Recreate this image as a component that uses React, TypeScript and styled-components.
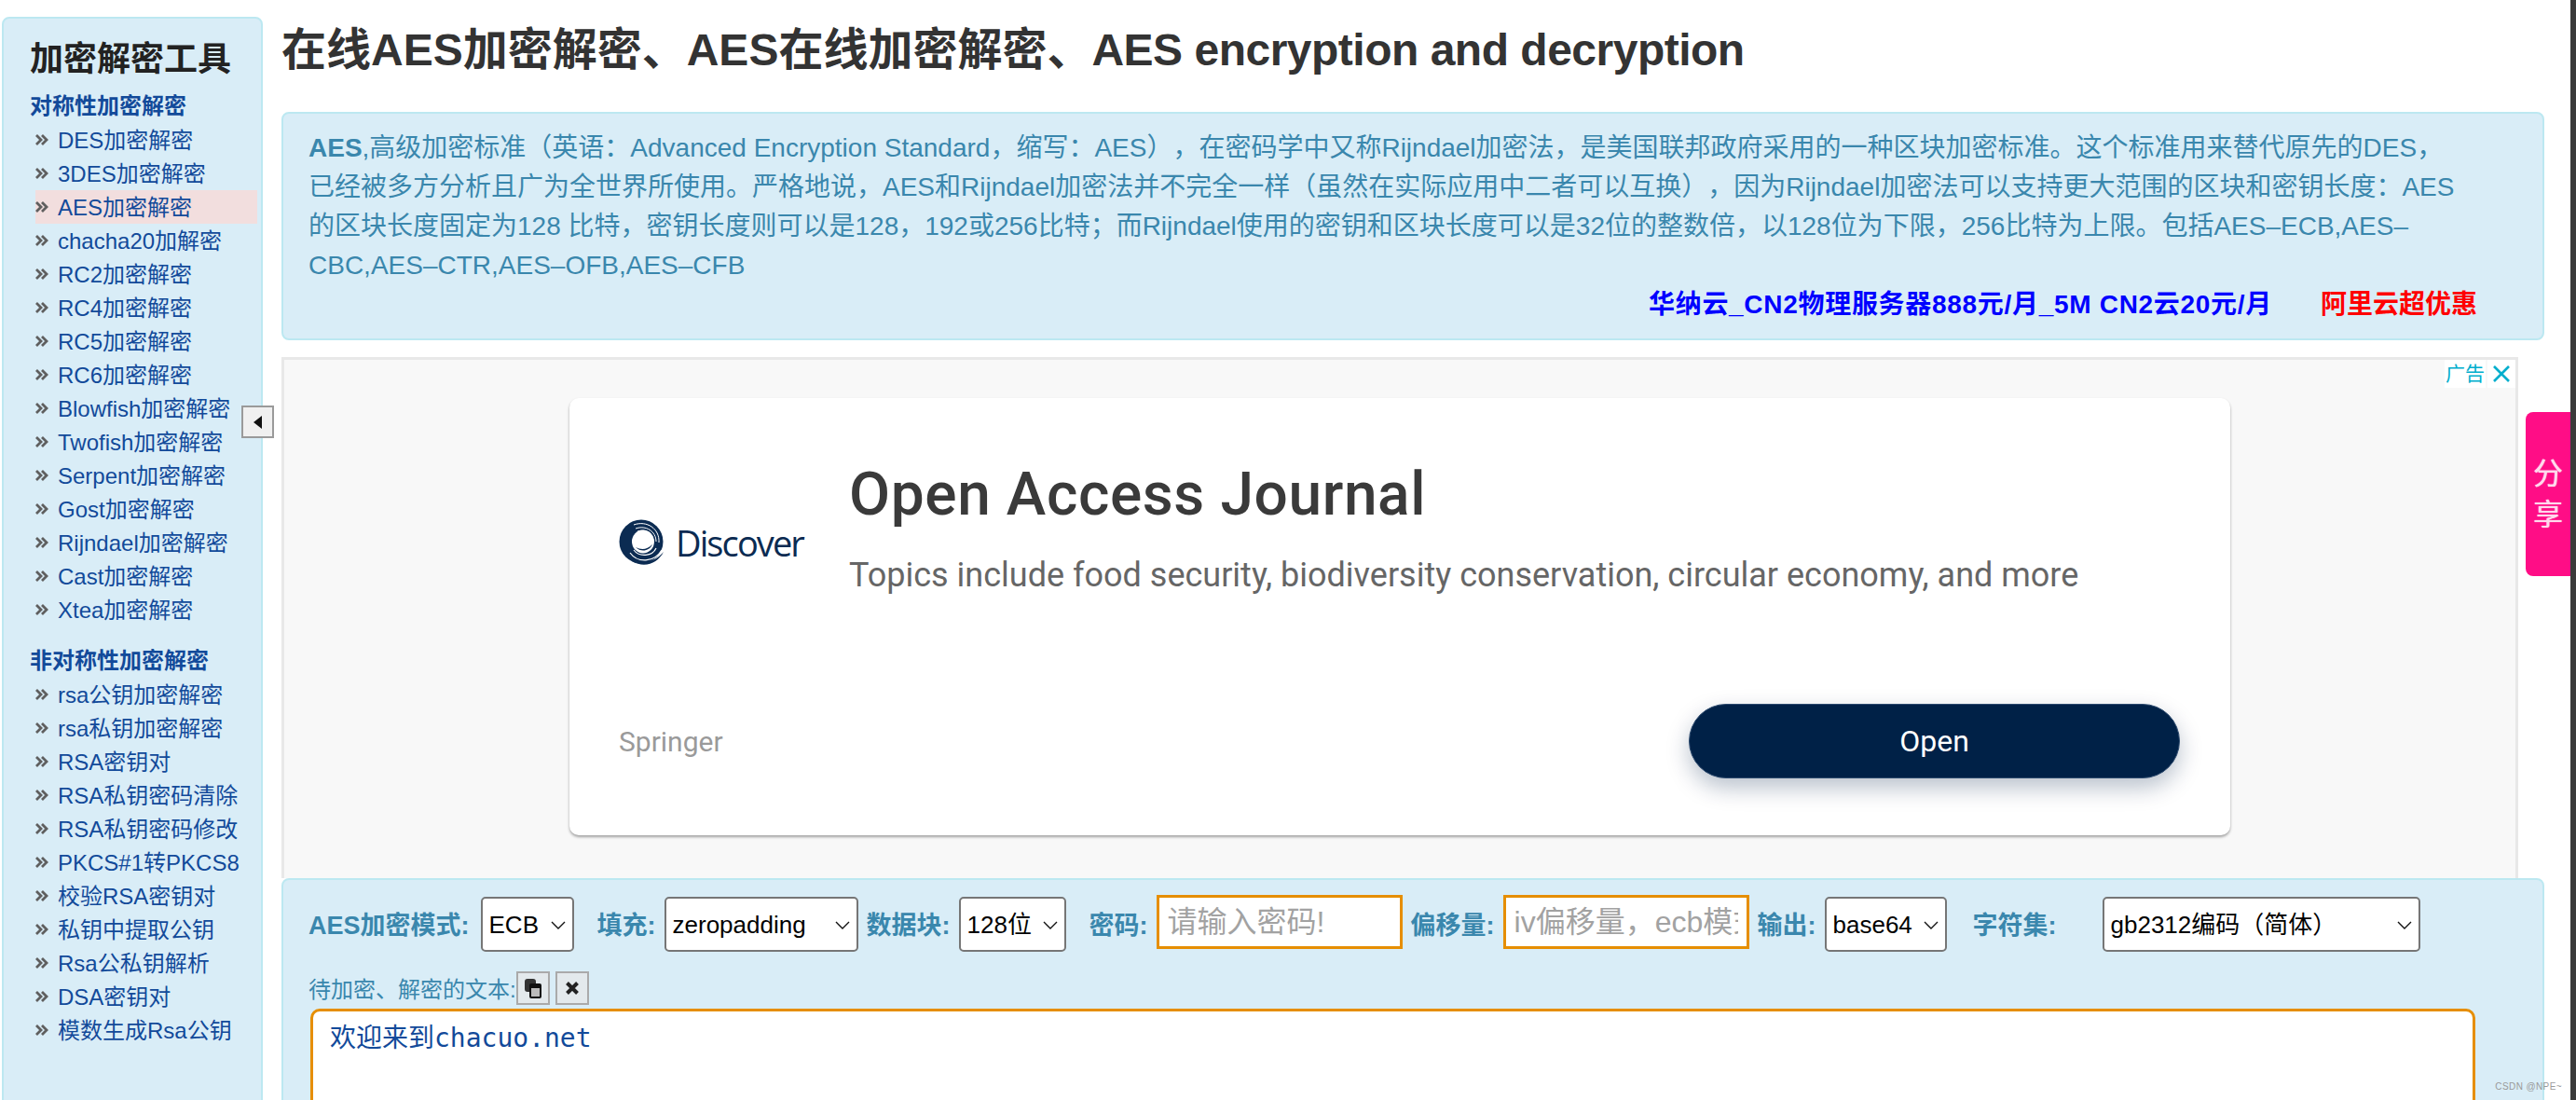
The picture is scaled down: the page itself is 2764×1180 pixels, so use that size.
import styled, { createGlobalStyle } from "styled-components";

const GlobalStyle = createGlobalStyle`
  html, body {
    margin: 0;
    padding: 0;
    background: #fff;
    overflow: hidden;
  }
  * {
    box-sizing: border-box;
    text-spacing-trim: space-all;
  }
`;

const SANS = `"Liberation Sans", "Noto Sans CJK SC", sans-serif`;

const symmetric = [
  "DES加密解密",
  "3DES加密解密",
  "AES加密解密",
  "chacha20加解密",
  "RC2加密解密",
  "RC4加密解密",
  "RC5加密解密",
  "RC6加密解密",
  "Blowfish加密解密",
  "Twofish加密解密",
  "Serpent加密解密",
  "Gost加密解密",
  "Rijndael加密解密",
  "Cast加密解密",
  "Xtea加密解密",
];

const asymmetric = [
  "rsa公钥加密解密",
  "rsa私钥加密解密",
  "RSA密钥对",
  "RSA私钥密码清除",
  "RSA私钥密码修改",
  "PKCS#1转PKCS8",
  "校验RSA密钥对",
  "私钥中提取公钥",
  "Rsa公私钥解析",
  "DSA密钥对",
  "模数生成Rsa公钥",
];

const Bullet = () => (
  <BulletIcon viewBox="0 0 14 12">
    <path d="M1 1l5 5-5 5M7 1l5 5-5 5" fill="none" stroke="#5f5f5f" strokeWidth="2.8" />
  </BulletIcon>
);

const Chevron = () => (
  <ChevronIcon viewBox="0 0 16 9">
    <path d="M1 1l7 7 7-7" fill="none" stroke="#111" strokeWidth="1.4" />
  </ChevronIcon>
);

const Swirl = () => (
  <svg width="50" height="52" viewBox="0 0 50 52">
    <circle cx="24" cy="25" r="23.5" fill="#0b2b52" />
    <ellipse cx="26" cy="25" rx="12" ry="12.5" fill="#fff" />
    <path d="M16 7c14-5 28 4 27 19M18 11c11-4 22 3 22 14M20 14c9-3 17 2 17 11" fill="none" stroke="#fff" strokeWidth="1" />
    <path d="M16 34c6 8 20 7 24-2M12 37c8 11 26 11 34-3" fill="none" stroke="#fff" strokeWidth="1.2" />
    <path d="M14 46c12 4 26 0 34-10-6 12-20 18-34 10z" fill="#0b2b52" />
    <path d="M18 31c6 3 12 3 18-3-3 7-12 9-18 3z" fill="#0b2b52" />
  </svg>
);

type SelectProps = { width: number; gap?: number; value: string };

const FieldSelect = ({ width, gap = 0, value }: SelectProps) => (
  <SelectWrap $width={width} $gap={gap}>
    <NativeSelect defaultValue={value}>
      <option>{value}</option>
    </NativeSelect>
    <Chevron />
  </SelectWrap>
);

const App = () => {
  return (
    <Page>
      <GlobalStyle />
      <Sidebar>
        <SideTitle>加密解密工具</SideTitle>
        <GroupTitle>对称性加密解密</GroupTitle>
        <SideList>
          {symmetric.map((name) => (
            <SideItem key={name} $active={name === "AES加密解密"}>
              <Bullet />
              {name}
            </SideItem>
          ))}
        </SideList>
        <GroupTitle $second>非对称性加密解密</GroupTitle>
        <SideList>
          {asymmetric.map((name) => (
            <SideItem key={name}>
              <Bullet />
              {name}
            </SideItem>
          ))}
        </SideList>
      </Sidebar>
      <SideToggle>
        <ToggleArrow />
      </SideToggle>

      <Main>
        <Heading>
          在线AES加密解密、AES在线加密解密、<HeadingTail>AES encryption and decryption</HeadingTail>
        </Heading>

        <InfoBox>
          <InfoText>
            <b>AES</b>,高级加密标准（英语：Advanced Encryption Standard，缩写：AES），在密码学中又称Rijndael加密法，是美国联邦政府采用的一种区块加密标准。这个标准用来替代原先的DES，
            <br />
            已经被多方分析且广为全世界所使用。严格地说，AES和Rijndael加密法并不完全一样（虽然在实际应用中二者可以互换），因为Rijndael加密法可以支持更大范围的区块和密钥长度：AES
            <br />
            的区块长度固定为128 比特，密钥长度则可以是128，192或256比特；而Rijndael使用的密钥和区块长度可以是32位的整数倍，以128位为下限，256比特为上限。包括AES–ECB,AES–
            <br />
            CBC,AES–CTR,AES–OFB,AES–CFB
          </InfoText>
          <PromoRow>
            <PromoLink $color="#0000ff" $spacing={0.7}>华纳云_CN2物理服务器888元/月_5M CN2云20元/月</PromoLink>
            <PromoLink $color="#ff0000">阿里云超优惠</PromoLink>
          </PromoRow>
        </InfoBox>

        <AdFrame>
          <AdTag>
            <AdLabel>广告</AdLabel>
            <AdClose>
              <svg width="18" height="18" viewBox="0 0 18 18">
                <path d="M1 1l16 16M17 1L1 17" stroke="#00aecd" strokeWidth="2.6" />
              </svg>
            </AdClose>
          </AdTag>
          <AdCard>
            <AdTop>
              <AdLogo>
                <Swirl />
                <LogoName>Discover</LogoName>
              </AdLogo>
              <AdCopy>
                <AdTitle>Open Access Journal</AdTitle>
                <AdSubtitle>Topics include food security, biodiversity conservation, circular economy, and more</AdSubtitle>
              </AdCopy>
            </AdTop>
            <AdBottom>
              <AdSource>Springer</AdSource>
              <OpenButton>Open</OpenButton>
            </AdBottom>
          </AdCard>
        </AdFrame>

        <FormPanel>
          <OptionRow>
            <FieldLabel>AES加密模式:</FieldLabel>
            <FieldSelect width={100} gap={12} value="ECB" />
            <FieldLabel $gap={25}>填充:</FieldLabel>
            <FieldSelect width={208} gap={9} value="zeropadding" />
            <FieldLabel $gap={9}>数据块:</FieldLabel>
            <FieldSelect width={115} gap={9} value="128位" />
            <FieldLabel $gap={25}>密码:</FieldLabel>
            <FieldInput $gap={9} placeholder="请输入密码!" />
            <FieldLabel $gap={9}>偏移量:</FieldLabel>
            <FieldInput $gap={9} placeholder="iv偏移量，ecb模式不需要" />
            <FieldLabel $gap={9}>输出:</FieldLabel>
            <FieldSelect width={131} gap={9} value="base64" />
            <FieldLabel $gap={28}>字符集:</FieldLabel>
            <FieldSelect width={341} gap={49} value="gb2312编码（简体）" />
          </OptionRow>
          <TextHeadRow>
            <TextHead>待加密、解密的文本:</TextHead>
            <ToolButton>
              <svg width="20" height="24" viewBox="0 0 20 24">
                <rect x="1" y="2" width="12" height="14" rx="3" fill="#333" />
                <rect x="6" y="7" width="13" height="16" rx="2" fill="#111" />
                <rect x="8" y="12" width="9" height="9" fill="#bbb" />
              </svg>
            </ToolButton>
            <ToolButton $gap={6}>
              <svg width="16" height="16" viewBox="0 0 16 16">
                <path d="M2.5 2.5l11 11M13.5 2.5l-11 11" stroke="#222" strokeWidth="4" />
              </svg>
            </ToolButton>
          </TextHeadRow>
          <SourceText defaultValue="欢迎来到chacuo.net" />
        </FormPanel>
      </Main>

      <ShareTab>
        <span>分</span>
        <span>享</span>
      </ShareTab>
      <Watermark>CSDN @NPE~</Watermark>
      <WindowEdge />
    </Page>
  );
};

export default App;

const Page = styled.div`
  position: relative;
  display: flex;
  width: 2764px;
  height: 1180px;
  overflow: hidden;
  background: #fff;
  font-family: ${SANS};
`;

const Sidebar = styled.aside`
  flex: none;
  width: 280px;
  height: 1200px;
  margin: 18px 0 0 2px;
  padding: 22px 4px 0 28px;
  background: #d9edf7;
  border: 2px solid #bce8f1;
  border-radius: 8px;
`;

const SideTitle = styled.h2`
  margin: 0;
  font-size: 36px;
  line-height: 44px;
  font-weight: 700;
  color: #222;
  white-space: nowrap;
`;

const GroupTitle = styled.h3<{ $second?: boolean }>`
  margin: ${({ $second }) => ($second ? "19px" : "10px")} 0 0;
  font-size: 24px;
  line-height: 36px;
  font-weight: 700;
  color: #124a9a;
  white-space: nowrap;
`;

const SideList = styled.div`
  display: flex;
  flex-direction: column;
  margin-left: 6px;
`;

const SideItem = styled.div<{ $active?: boolean }>`
  display: flex;
  align-items: center;
  gap: 10px;
  height: 36px;
  padding-bottom: 3px;
  font-size: 24px;
  color: #124a9a;
  white-space: nowrap;
  background: ${({ $active }) => ($active ? "#f2dede" : "transparent")};
`;

const BulletIcon = styled.svg`
  flex: none;
  width: 14px;
  height: 12px;
  margin-top: 2px;
`;

const SideToggle = styled.div`
  position: absolute;
  left: 259px;
  top: 435px;
  display: flex;
  align-items: center;
  justify-content: center;
  width: 35px;
  height: 35px;
  background: #f0f0f0;
  border: 2px solid #9a9a9a;
`;

const ToggleArrow = styled.span`
  width: 0;
  height: 0;
  border-top: 7px solid transparent;
  border-bottom: 7px solid transparent;
  border-right: 9px solid #111;
`;

const Main = styled.main`
  flex: none;
  display: flex;
  flex-direction: column;
  width: 2428px;
  margin-left: 20px;
`;

const Heading = styled.h1`
  flex: none;
  margin: 24px 0 36px;
  font-size: 48px;
  line-height: 60px;
  font-weight: 700;
  color: #333;
  white-space: nowrap;
`;

const HeadingTail = styled.span`
  letter-spacing: -0.5px;
`;

const InfoBox = styled.section`
  flex: none;
  height: 245px;
  padding: 16px 27px 0;
  background: #d9edf7;
  border: 2px solid #bce8f1;
  border-radius: 8px;
`;

const InfoText = styled.p`
  margin: 0;
  font-size: 28px;
  line-height: 42px;
  color: #3a87ad;
  white-space: nowrap;
`;

const PromoRow = styled.div`
  display: flex;
  justify-content: flex-end;
  gap: 52px;
  padding-right: 43px;
`;

const PromoLink = styled.a<{ $color: string; $spacing?: number }>`
  font-size: 28px;
  line-height: 42px;
  font-weight: 700;
  letter-spacing: ${({ $spacing }) => $spacing ?? 0}px;
  color: ${({ $color }) => $color};
  white-space: nowrap;
`;

const AdFrame = styled.section`
  position: relative;
  flex: none;
  display: flex;
  justify-content: center;
  width: 2400px;
  height: 559px;
  margin-top: 18px;
  padding-top: 41px;
  background: #f8f8f8;
  border: solid #e8e8e8;
  border-width: 3px 3px 0;
`;

const AdTag = styled.div`
  position: absolute;
  top: 0;
  right: 0;
  display: flex;
  gap: 2px;
`;

const AdLabel = styled.span`
  width: 44px;
  height: 30px;
  background: #fff;
  font-size: 21px;
  line-height: 30px;
  text-align: center;
  color: #00aecd;
`;

const AdClose = styled.span`
  display: flex;
  align-items: center;
  justify-content: center;
  width: 30px;
  height: 30px;
  background: #fff;
`;

const AdCard = styled.div`
  width: 1782px;
  height: 469px;
  padding: 0 54px 0 53px;
  background: #fff;
  border-radius: 10px;
  box-shadow: 0 2px 3px rgba(0, 0, 0, 0.35);
`;

const AdTop = styled.div`
  display: flex;
  align-items: center;
  height: 310px;
`;

const AdLogo = styled.div`
  flex: none;
  display: flex;
  align-items: center;
  gap: 11px;
  width: 247px;
`;

const LogoName = styled.span`
  font-family: "Open Sans", sans-serif;
  font-size: 38px;
  letter-spacing: -1.9px;
  color: #0b2b52;
`;

const AdCopy = styled.div`
  display: flex;
  flex-direction: column;
  gap: 29px;
  padding-bottom: 29px;
`;

const AdTitle = styled.div`
  font-family: Roboto, sans-serif;
  font-size: 64px;
  line-height: 70px;
  letter-spacing: 0.6px;
  font-weight: 500;
  color: #3a3a3a;
  white-space: nowrap;
`;

const AdSubtitle = styled.div`
  font-family: Roboto, sans-serif;
  font-size: 36px;
  line-height: 44px;
  color: #666;
  white-space: nowrap;
`;

const AdBottom = styled.div`
  display: flex;
  align-items: center;
  justify-content: space-between;
  margin-top: 18px;
`;

const AdSource = styled.span`
  font-family: Roboto, sans-serif;
  font-size: 30px;
  color: #9a9a9a;
`;

const OpenButton = styled.button`
  width: 527px;
  height: 80px;
  padding: 0;
  background: #002147;
  border: 1px solid #2c4a6e;
  border-radius: 40px;
  box-shadow: 0 10px 24px rgba(0, 33, 71, 0.28);
  font-family: Roboto, sans-serif;
  font-size: 32px;
  color: #fff;
`;

const FormPanel = styled.section`
  flex: none;
  height: 300px;
  padding: 16px 0 0 27px;
  background: #d9edf7;
  border: 2px solid #bce8f1;
  border-radius: 8px;
`;

const OptionRow = styled.div`
  display: flex;
  align-items: flex-start;
  height: 61px;
`;

const FieldLabel = styled.label<{ $gap?: number }>`
  flex: none;
  margin-left: ${({ $gap }) => $gap ?? 0}px;
  font-size: 27px;
  line-height: 66px;
  font-weight: 700;
  color: #3a87ad;
  white-space: nowrap;
`;

const SelectWrap = styled.div<{ $width: number; $gap: number }>`
  position: relative;
  flex: none;
  width: ${({ $width }) => $width}px;
  height: 59px;
  margin: 2px 0 0 ${({ $gap }) => $gap}px;
`;

const NativeSelect = styled.select`
  appearance: none;
  display: block;
  width: 100%;
  height: 100%;
  padding: 0 0 0 7px;
  background: #fff;
  border: 2px solid #767676;
  border-radius: 5px;
  font-family: ${SANS};
  font-size: 26px;
  color: #000;
`;

const ChevronIcon = styled.svg`
  position: absolute;
  right: 9px;
  top: 26px;
  width: 16px;
  height: 9px;
`;

const FieldInput = styled.input<{ $gap?: number }>`
  flex: none;
  width: 264px;
  height: 58px;
  margin-left: ${({ $gap }) => $gap ?? 0}px;
  padding: 0 9px;
  background: #fff;
  border: 3px solid #e68e00;
  outline: none;
  font-family: ${SANS};
  font-size: 32px;

  &::placeholder {
    color: #a2a2a2;
    opacity: 1;
  }
`;

const TextHeadRow = styled.div`
  display: flex;
  align-items: flex-start;
  height: 40px;
  margin-top: 21px;
`;

const TextHead = styled.span`
  font-size: 24px;
  line-height: 40px;
  color: #3a87ad;
  white-space: nowrap;
`;

const ToolButton = styled.span<{ $gap?: number }>`
  display: flex;
  align-items: center;
  justify-content: center;
  width: 36px;
  height: 36px;
  margin-left: ${({ $gap }) => $gap ?? 0}px;
  background: #e3e9ec;
  border: 2px solid #aaa;
`;

const SourceText = styled.textarea`
  display: block;
  width: 2323px;
  height: 300px;
  margin-left: 2px;
  padding: 13px 18px;
  background: #fff;
  border: 3px solid #e68e00;
  border-radius: 10px;
  outline: none;
  resize: none;
  font-family: "DejaVu Sans Mono", "Noto Sans CJK SC", monospace;
  font-size: 28px;
  line-height: 32px;
  color: #124a9a;
`;

const ShareTab = styled.div`
  position: absolute;
  right: 6px;
  top: 442px;
  display: flex;
  flex-direction: column;
  align-items: center;
  justify-content: center;
  width: 48px;
  height: 176px;
  background: #ff0d86;
  border-radius: 8px 0 0 8px;
  font-size: 32px;
  line-height: 44px;
  color: #ffd9ec;
  text-shadow: 0 0 1px #fff;
`;

const Watermark = styled.div`
  position: absolute;
  right: 15px;
  top: 1160px;
  font-size: 10px;
  line-height: 12px;
  letter-spacing: 0.4px;
  color: #9a9a9a;
  white-space: nowrap;
`;

const WindowEdge = styled.div`
  position: absolute;
  top: 0;
  right: 0;
  width: 6px;
  height: 100%;
  background: #3a3a3a;
`;
